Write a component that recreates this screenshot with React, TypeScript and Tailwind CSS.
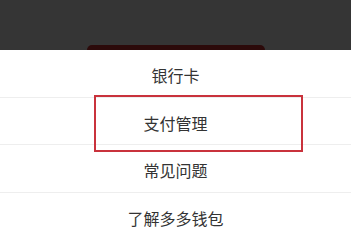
const ROWS = ['银行卡', '支付管理', '常见问题', '了解多多钱包'];

export default function App() {
  return (
    <div
      className="w-[358px] h-[237px] bg-white overflow-hidden"
      style={{ fontFamily: '"Noto Sans CJK SC", "Noto Sans", sans-serif' }}
    >
      <div className="w-[351px]">
        {/* dimmed page behind the sheet */}
        <div className="h-[50px] bg-[#353535] flex items-end justify-center">
          <div className="w-[178px] h-[5px] rounded-t-[6px] bg-[#2c0a0a]" />
        </div>

        {/* action sheet */}
        <div className="bg-white">
          {ROWS.map((label, i) => (
            <div
              key={label}
              className={`relative flex items-center justify-center pt-[3px] text-[16px] text-[#333333] border-b border-[#eeeeee] ${
                i === 1 ? 'h-[47px]' : 'h-[48px]'
              }`}
            >
              {label}
              {i === 1 && (
                <div className="absolute left-[94px] -top-[3px] w-[209px] h-[57px] border-2 border-[#c9323c]" />
              )}
            </div>
          ))}
        </div>
      </div>
    </div>
  );
}
